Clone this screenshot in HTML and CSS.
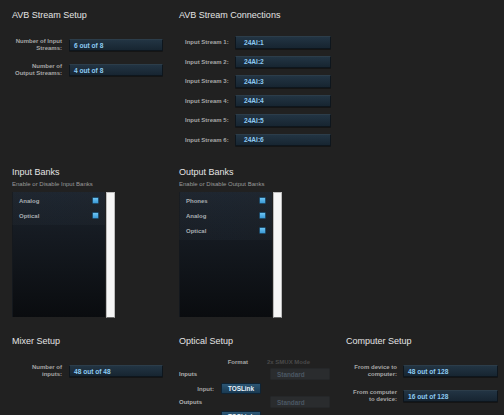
FILE: index.html
```html
<!DOCTYPE html>
<html lang="en">

<head>
    <meta charset="UTF-8">
    <meta name="viewport" content="width=device-width, initial-scale=1.0">
    <title>AVB Setup</title>
    <link rel="stylesheet" href="styles.css">
</head>

<body>
    <div class="page">
        <div class="row row-top">
            <section class="col">
                <h2>AVB Stream Setup</h2>
                <div class="form">
                    <div class="field-row">
                        <label>Number of Input Streams:</label>
                        <div class="field">6 out of 8</div>
                    </div>
                    <div class="field-row">
                        <label>Number of Output Streams:</label>
                        <div class="field">4 out of 8</div>
                    </div>
                </div>
            </section>
            <section class="col">
                <h2>AVB Stream Connections</h2>
                <div class="streams">
                    <div class="stream-row"><label>Input Stream 1:</label><div class="field wide">24AI:1</div></div>
                    <div class="stream-row"><label>Input Stream 2:</label><div class="field wide">24AI:2</div></div>
                    <div class="stream-row"><label>Input Stream 3:</label><div class="field wide">24AI:3</div></div>
                    <div class="stream-row"><label>Input Stream 4:</label><div class="field wide">24AI:4</div></div>
                    <div class="stream-row"><label>Input Stream 5:</label><div class="field wide">24AI:5</div></div>
                    <div class="stream-row"><label>Input Stream 6:</label><div class="field wide">24AI:6</div></div>
                </div>
            </section>
        </div>

        <div class="row row-mid">
            <section class="col">
                <h2>Input Banks</h2>
                <p class="sub">Enable or Disable Input Banks</p>
                <div class="bank-box">
                    <div class="bank">
                        <div class="bank-list">
                            <div class="bank-item"><span>Analog</span><i class="check"></i></div>
                            <div class="bank-item"><span>Optical</span><i class="check"></i></div>
                        </div>
                    </div>
                    <div class="scroll"></div>
                </div>
            </section>
            <section class="col">
                <h2>Output Banks</h2>
                <p class="sub">Enable or Disable Output Banks</p>
                <div class="bank-box">
                    <div class="bank">
                        <div class="bank-list">
                            <div class="bank-item"><span>Phones</span><i class="check"></i></div>
                            <div class="bank-item"><span>Analog</span><i class="check"></i></div>
                            <div class="bank-item"><span>Optical</span><i class="check"></i></div>
                        </div>
                    </div>
                    <div class="scroll"></div>
                </div>
            </section>
        </div>

        <div class="row row-bottom">
            <section class="col">
                <h2>Mixer Setup</h2>
                <div class="form">
                    <div class="field-row">
                        <label>Number of inputs:</label>
                        <div class="field">48 out of 48</div>
                    </div>
                </div>
            </section>
            <section class="col">
                <h2>Optical Setup</h2>
                <div class="optical">
                    <div class="opt-head">
                        <span class="fmt">Format</span>
                        <span class="smux">2x SMUX Mode</span>
                    </div>
                    <div class="opt-group">
                        <span class="grp">Inputs</span>
                        <div class="field off">Standard</div>
                    </div>
                    <div class="opt-line">
                        <label>Input:</label>
                        <div class="btn">TOSLink</div>
                    </div>
                    <div class="opt-group">
                        <span class="grp">Outputs</span>
                        <div class="field off">Standard</div>
                    </div>
                    <div class="opt-line">
                        <label>Output:</label>
                        <div class="btn">TOSLink</div>
                    </div>
                </div>
            </section>
            <section class="col last">
                <h2>Computer Setup</h2>
                <div class="form">
                    <div class="field-row">
                        <label class="lbl-c">From device to computer:</label>
                        <div class="field">48 out of 128</div>
                    </div>
                    <div class="field-row">
                        <label class="lbl-c">From computer to device:</label>
                        <div class="field">16 out of 128</div>
                    </div>
                </div>
            </section>
        </div>
    </div>
</body>

</html>
```

FILE: styles.css
```css
* {
    margin: 0;
    padding: 0;
    box-sizing: border-box;
}

html,
body {
    width: 100%;
    height: 100%;
    overflow: hidden;
}

body {
    background: #212121;
    font-family: "Liberation Sans", Arial, sans-serif;
    color: #a9a9a9;
}

.page {
    padding-left: 12px;
}

.row {
    display: flex;
    padding-top: 10px;
}

.row-top {
    height: 157px;
}

.row-mid {
    height: 169px;
}

.col {
    width: 167px;
    flex-shrink: 0;
}

.col.last {
    width: 158px;
}

h2 {
    font-size: 9px;
    line-height: 11px;
    font-weight: normal;
    color: #e4e4e4;
}

/* label + field forms */
.form {
    margin-top: 17px;
}

.field-row {
    display: flex;
    align-items: center;
    margin-bottom: 11px;
}

.field-row label {
    width: 50px;
    margin-right: 7px;
    text-align: right;
    font-size: 6px;
    line-height: 7px;
    font-weight: bold;
    color: #a6a6a6;
}

.field-row label.lbl-c {
    width: 51px;
    margin-right: 6px;
}

.field {
    width: 94px;
    height: 12px;
    padding-left: 4px;
    display: flex;
    align-items: center;
    font-size: 6.6px;
    font-weight: bold;
    color: #8ccaf2;
    background: linear-gradient(#223443, #172531);
    border: 1px solid #0e161d;
    border-top-color: #2c3d4a;
    border-radius: 1px;
    box-shadow: 0 1px 0 rgba(0, 0, 0, 0.35);
}

.col.last .field {
    width: 95px;
}

/* stream connections */
.streams {
    margin-top: 15px;
    display: flex;
    flex-direction: column;
    gap: 7px;
}

.stream-row {
    display: flex;
    align-items: center;
}

.stream-row label {
    width: 44px;
    margin: 0 6px;
    font-size: 6px;
    font-weight: bold;
    color: #a6a6a6;
    white-space: nowrap;
}

.field.wide {
    width: 96px;
    height: 12.5px;
    padding-left: 8px;
}

/* banks */
.sub {
    margin-top: 2px;
    font-size: 6px;
    line-height: 8px;
    color: #9a9a9a;
}

.bank-box {
    display: flex;
    margin-top: 4px;
}

.bank {
    width: 93px;
    height: 125px;
    background: linear-gradient(#1b222b, #0a0c0f);
    box-shadow: inset 1px 0 0 #14181d;
}

.bank-list {
    padding-top: 1px;
    padding-bottom: 2px;
    background: linear-gradient(90deg, rgba(255, 255, 255, 0.02), rgba(90, 120, 150, 0.05), rgba(255, 255, 255, 0.02));
}

.bank-item {
    display: flex;
    align-items: center;
    justify-content: space-between;
    height: 15px;
    padding: 0 6px 0 7px;
    font-size: 6px;
    font-weight: bold;
    color: #a8adb2;
}

.check {
    display: block;
    width: 7px;
    height: 7px;
    background: linear-gradient(#6cc4f4, #3c9ad6);
    border: 1px solid #1f4d6c;
    border-radius: 1px;
}

.scroll {
    width: 9px;
    height: 126px;
    margin-left: 1px;
    background: #f6f6f6;
    border: 1px solid #bdbdbd;
    border-bottom-color: #6a6a6a;
}

/* optical */
.optical {
    margin-top: 9px;
    font-size: 6px;
    font-weight: bold;
}

.opt-head {
    display: flex;
    align-items: center;
    height: 12px;
}

.fmt {
    width: 69px;
    text-align: right;
    color: #a6a6a6;
}

.smux {
    margin-left: 19px;
    color: #4a4a4a;
}

.opt-group {
    display: flex;
    align-items: center;
    height: 12px;
}

.grp {
    width: 91px;
    color: #b0b0b0;
}

.field.off {
    width: 60px;
    padding-left: 6px;
    color: #4b5763;
    background: #2a2c2e;
    border: 1px solid #252729;
    box-shadow: none;
    font-size: 6.4px;
}

.opt-line {
    display: flex;
    align-items: center;
    height: 13px;
    margin: 2px 0 1px;
}

.opt-line label {
    width: 35px;
    margin-right: 7px;
    text-align: right;
    color: #a6a6a6;
}

.btn {
    width: 40px;
    height: 11.5px;
    display: flex;
    align-items: center;
    justify-content: center;
    font-size: 6.4px;
    color: #eaf4fb;
    background: linear-gradient(#2c5674, #1a3a52);
    border: 1px solid #0f2333;
    border-radius: 1px;
}
```
